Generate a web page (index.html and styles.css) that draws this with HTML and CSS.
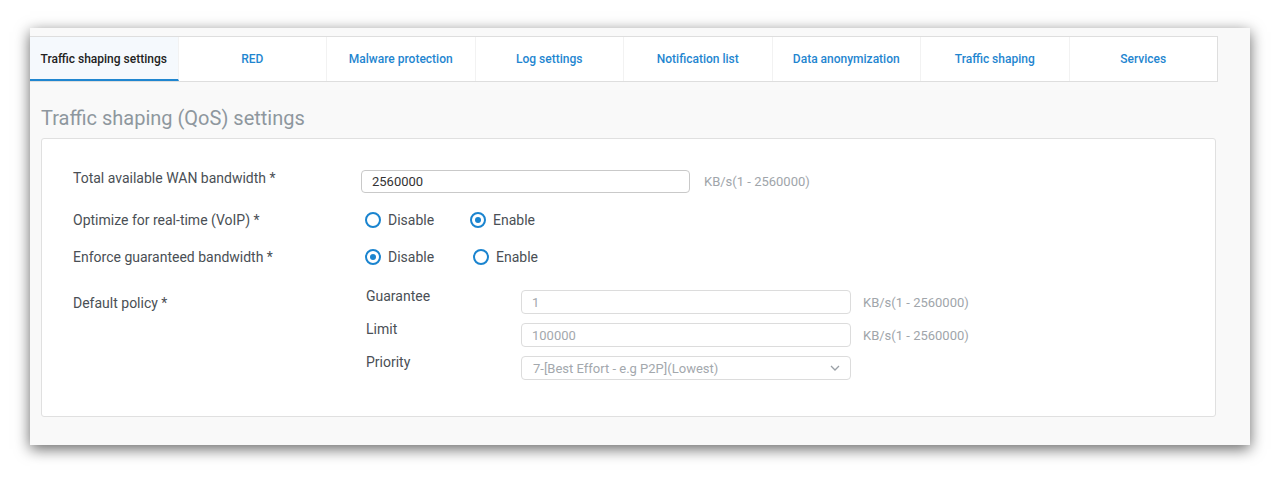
FILE: index.html
```html
<!DOCTYPE html>
<html lang="en">
<head>
    <meta charset="UTF-8">
    <title>Traffic shaping settings</title>
    <link rel="stylesheet" href="styles.css">
</head>
<body>
    <div class="panel">
        <ul class="tabs">
            <li class="tab active">Traffic shaping settings</li>
            <li class="tab">RED</li>
            <li class="tab">Malware protection</li>
            <li class="tab">Log settings</li>
            <li class="tab">Notification list</li>
            <li class="tab">Data anonymization</li>
            <li class="tab">Traffic shaping</li>
            <li class="tab">Services</li>
        </ul>

        <h2 class="section-title">Traffic shaping (QoS) settings</h2>

        <div class="box">
            <div class="row row-wan">
                <label class="field-label">Total available WAN bandwidth *</label>
                <div class="field">
                    <input class="text-input wide" type="text" value="2560000">
                    <span class="hint">KB/s(1 - 2560000)</span>
                </div>
            </div>

            <div class="row row-voip">
                <label class="field-label">Optimize for real-time (VoIP) *</label>
                <div class="field radios">
                    <span class="radio"><span class="dot"></span>Disable</span>
                    <span class="radio checked"><span class="dot"></span>Enable</span>
                </div>
            </div>

            <div class="row row-enforce">
                <label class="field-label">Enforce guaranteed bandwidth *</label>
                <div class="field radios">
                    <span class="radio checked"><span class="dot"></span>Disable</span>
                    <span class="radio second"><span class="dot"></span>Enable</span>
                </div>
            </div>

            <div class="row row-policy">
                <label class="field-label">Default policy *</label>
                <div class="policy">
                    <div class="sub-row">
                        <span class="sub-label">Guarantee</span>
                        <input class="text-input narrow" type="text" value="1" disabled>
                        <span class="hint">KB/s(1 - 2560000)</span>
                    </div>
                    <div class="sub-row">
                        <span class="sub-label">Limit</span>
                        <input class="text-input narrow" type="text" value="100000" disabled>
                        <span class="hint">KB/s(1 - 2560000)</span>
                    </div>
                    <div class="sub-row">
                        <span class="sub-label">Priority</span>
                        <div class="select">
                            <span>7-[Best Effort - e.g P2P](Lowest)</span>
                            <svg width="10" height="6" viewBox="0 0 10 6">
                                <path d="M1 1 L5 5 L9 1" fill="none" stroke="#9aa0a6" stroke-width="1.3"/>
                            </svg>
                        </div>
                    </div>
                </div>
            </div>
        </div>
    </div>
</body>
</html>
```

FILE: styles.css
```css
* {
    margin: 0;
    padding: 0;
    box-sizing: border-box;
    font-family: Roboto, "Liberation Sans", sans-serif;
}

body {
    background-color: #fff;
    height: 477px;
    overflow: hidden;
}

.panel {
    margin: 28px 0 0 30px;
    width: 1220px;
    height: 417px;
    background-color: #f9f9f9;
    padding-top: 8px;
    box-shadow: 0 4px 14px rgba(0, 0, 0, 0.6);
}

.tabs {
    list-style: none;
    display: flex;
    width: 1188px;
    height: 46px;
    background-color: #fff;
    border: 1px solid #dedede;
    border-left: none;
}

.tab {
    flex: 1;
    display: flex;
    align-items: center;
    justify-content: center;
    font-size: 12px;
    font-weight: 500;
    color: #1f86d0;
    border-right: 1px solid #f2f2f2;
}

.tab:last-child {
    border-right: none;
}

.tab.active {
    color: #222;
    background-color: #f5f9fd;
    border-bottom: 2px solid #1f86d0;
    padding-top: 2px;
}

.section-title {
    margin: 24px 0 0 11px;
    font-size: 20px;
    font-weight: 400;
    color: #8e979e;
    line-height: 24px;
}

.box {
    margin: 8px 0 0 11px;
    width: 1175px;
    height: 279px;
    background-color: #fff;
    border: 1px solid #e0e0e0;
    border-radius: 3px;
    padding: 31px 0 0 31px;
}

.row {
    display: flex;
    align-items: flex-start;
    font-size: 14px;
    color: #4a4f55;
}

.field-label {
    width: 288px;
    line-height: 16px;
}

.row-voip {
    margin-top: 19px;
}

.row-enforce {
    margin-top: 21px;
}

.row-policy {
    margin-top: 25px;
}

.row-policy .field-label {
    padding-top: 5px;
}

.field {
    display: flex;
    align-items: center;
}

.text-input {
    height: 23px;
    border: 1px solid #c9c9c9;
    border-radius: 4px;
    padding: 0 10px;
    font-size: 13px;
    color: #333;
    background-color: #fff;
}

.text-input.wide {
    width: 329px;
}

.text-input.narrow {
    width: 330px;
    height: 24px;
    border-color: #dcdcdc;
    color: #a3a8ad;
}

.hint {
    margin-left: 14px;
    font-size: 13px;
    color: #a0a5aa;
}

.radios {
    height: 16px;
}

.radio {
    display: flex;
    align-items: center;
    width: 105px;
    padding-left: 4px;
    color: #4a4f55;
}

.radio.second {
    padding-left: 7px;
}

.dot {
    width: 16px;
    height: 16px;
    border: 2px solid #1a84cf;
    border-radius: 50%;
    margin-right: 7px;
    display: flex;
    align-items: center;
    justify-content: center;
}

.radio.checked .dot::after {
    content: "";
    width: 6px;
    height: 6px;
    border-radius: 50%;
    background-color: #1a84cf;
}

.policy {
    display: flex;
    flex-direction: column;
    gap: 9px;
}

.sub-row {
    display: flex;
    align-items: flex-start;
}

.sub-label {
    width: 160px;
    padding-left: 5px;
    line-height: 14px;
    margin-top: -1px;
}

.sub-row .hint {
    margin-top: 5px;
    margin-left: 12px;
}

.select {
    width: 330px;
    height: 24px;
    border: 1px solid #dcdcdc;
    border-radius: 4px;
    padding: 0 10px 0 11px;
    display: flex;
    align-items: center;
    justify-content: space-between;
    font-size: 13px;
    color: #a3a8ad;
}
```
